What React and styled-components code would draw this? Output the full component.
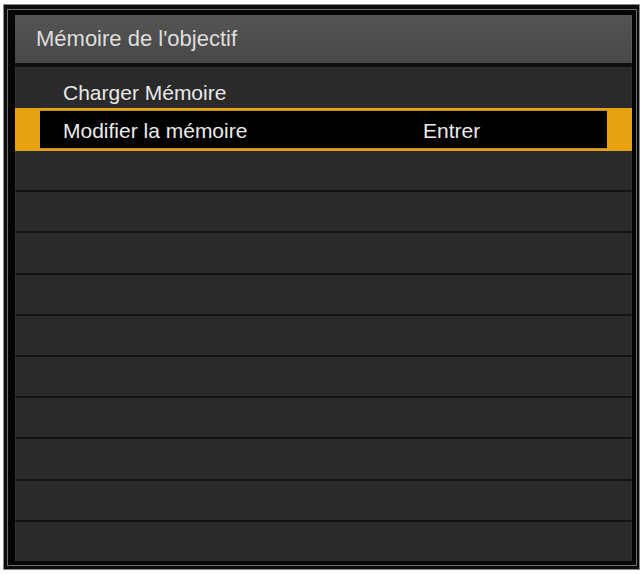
import React from "react";
import styled, { createGlobalStyle } from "styled-components";

const Global = createGlobalStyle`
  html, body { margin: 0; padding: 0; background: #ffffff; }
  body { font-family: "Liberation Sans", Arial, sans-serif; }
  * { box-sizing: border-box; }
`;

const Frame = styled.div`
  margin: 4px 0 0 3px;
  width: 637px;
  height: 566px;
  border: 1px solid #8a8a8a;
  background: #0c0c0c;
  padding: 4px 2px 3px 3px;
`;

const InnerFrame = styled.div`
  width: 100%;
  height: 100%;
  border: 1px solid #6e6e6e;
  background: #050505;
  padding: 5px 4px 4px 7px;
`;

const Panel = styled.div`
  width: 617px;
  height: 546px;
  display: flex;
  flex-direction: column;
  background: #101010;
`;

const Header = styled.div`
  height: 48px;
  flex: 0 0 48px;
  background: linear-gradient(#545454, #484848);
  color: #dedede;
  font-size: 22px;
  line-height: 48px;
  padding-left: 21px;
  margin-bottom: 4px;
  border-right: 1px solid #5a5a5a;
`;

const List = styled.div`
  flex: 1;
  display: flex;
  flex-direction: column;
`;

const Row = styled.div`
  flex: ${(p) => (p.$fixed ? `0 0 ${p.$fixed}px` : "1 1 0")};
  background: #2a2a2a;
  border-top: ${(p) => (p.$divider ? "2px solid #121212" : "none")};
  border-left: 1px solid #323232;
  border-right: 1px solid #323232;
  color: #e8e8e8;
  font-size: 21px;
  line-height: 24px;
  padding: 14px 0 0 47px;
`;

const Selected = styled.div`
  flex: 0 0 43px;
  background: #e5a312;
  padding: 3px 25px;
  display: flex;
`;

const SelectedInner = styled.div`
  flex: 1;
  background: #000;
  box-shadow: 0 -1px 0 #b98a3a, 0 1px 0 #b98a3a;
  display: flex;
  align-items: flex-start;
  padding: 8px 0 0 23px;
  color: #ececec;
  font-size: 21px;
  line-height: 24px;
`;

const Label = styled.span`
  flex: 0 0 360px;
`;

const Value = styled.span`
  flex: 1;
`;

const emptyRows = Array.from({ length: 10 });

export default function App() {
  return (
    <>
      <Global />
      <Frame>
        <InnerFrame>
          <Panel>
            <Header>Mémoire de l'objectif</Header>
            <List>
              <Row $fixed={41}>Charger Mémoire</Row>
              <Selected>
                <SelectedInner>
                  <Label>Modifier la mémoire</Label>
                  <Value>Entrer</Value>
                </SelectedInner>
              </Selected>
              {emptyRows.map((_, i) => (
                <Row key={i} $divider={i > 0} />
              ))}
            </List>
          </Panel>
        </InnerFrame>
      </Frame>
    </>
  );
}
